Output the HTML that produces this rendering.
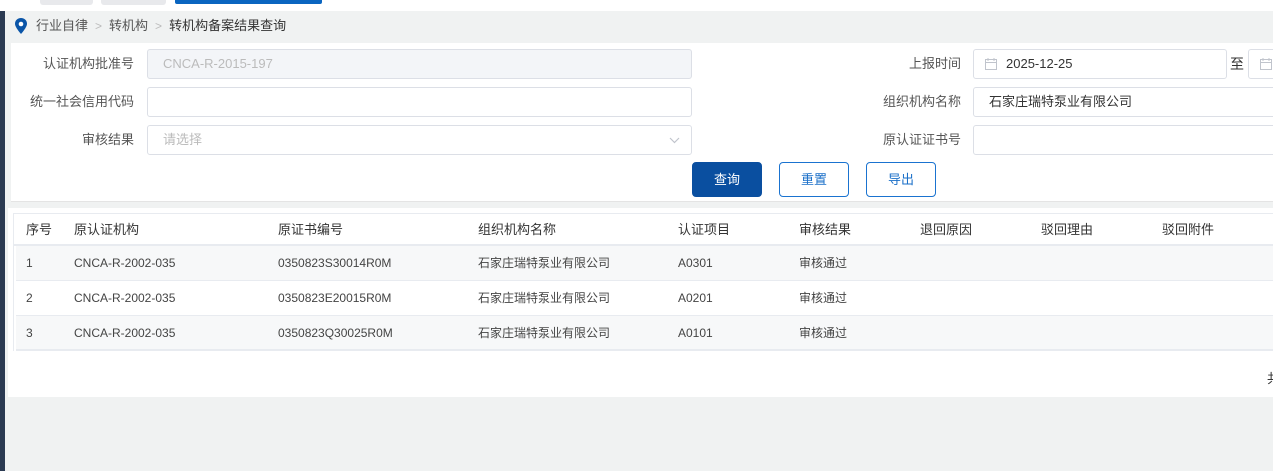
<!DOCTYPE html><html><head><meta charset="utf-8"><style>
*{box-sizing:border-box;margin:0;padding:0}
body{width:1273px;height:471px;overflow:hidden;background:#f0f2f2;font-family:"Liberation Sans","Noto Sans CJK SC",sans-serif;position:relative;color:#333}
.a{position:absolute}
.lbl{position:absolute;font-size:13px;color:#555;text-align:right;width:134px;line-height:30px}
.inp{position:absolute;height:30px;border:1px solid #dcdfe6;border-radius:3px;background:#fff;font-size:13px;line-height:28px;padding-left:15px;color:#333}
.btn{position:absolute;top:162px;width:70px;height:35px;border:1px solid #1a73d0;border-radius:4px;color:#1a6fc8;font-size:13px;text-align:center;line-height:33px;background:#fff}
.th{position:absolute;top:214px;font-size:13px;line-height:31px;color:#333}
.row{position:absolute;left:16px;width:1257px;height:35px;border-bottom:1px solid #e8ebf0}
.c{position:absolute;font-size:12px;line-height:35px;color:#444}
.sep{color:#bbb;margin:0 7px;font-size:12px}
</style></head><body>
<div class="a" style="left:0;top:0;width:1273px;height:11px;background:#fff"></div>
<div class="a" style="left:40px;top:0;width:53px;height:5px;background:#e8e9ec;border-radius:0 0 3px 3px"></div>
<div class="a" style="left:101px;top:0;width:65px;height:5px;background:#e8e9ec;border-radius:0 0 3px 3px"></div>
<div class="a" style="left:175px;top:0;width:147px;height:4px;background:#0a65c0;border-radius:0 0 2px 2px"></div>
<div class="a" style="left:0;top:11px;width:5px;height:460px;background:#2b3a52"></div>
<svg class="a" style="left:14px;top:18px" width="14" height="16" viewBox="0 0 14 16"><path d="M7 0C3.4 0 1 2.6 1 5.8 1 9.5 7 16 7 16s6-6.5 6-10.2C13 2.6 10.6 0 7 0z" fill="#0a55a8"/><circle cx="7" cy="6" r="2.3" fill="#fff"/></svg>
<div class="a" style="left:36px;top:17px;font-size:13px;line-height:18px;color:#555">行业自律<span class="sep">&gt;</span>转机构<span class="sep">&gt;</span><span style="color:#333">转机构备案结果查询</span></div>
<div class="a" style="left:11px;top:43px;width:1262px;height:159px;background:#fff;border-bottom:1px solid #e4e4e4"></div>
<div class="lbl" style="left:0;top:49px">认证机构批准号</div>
<div class="inp" style="left:147px;top:49px;width:545px;background:#f3f5f8;color:#bbb">CNCA-R-2015-197</div>
<div class="lbl" style="left:0;top:87px">统一社会信用代码</div>
<div class="inp" style="left:147px;top:87px;width:545px"></div>
<div class="lbl" style="left:0;top:125px">审核结果</div>
<div class="inp" style="left:147px;top:125px;width:545px;color:#bbb">请选择<svg style="position:absolute;right:11px;top:11px" width="11" height="7"><path d="M1 1l4.5 4.5L10 1" fill="none" stroke="#c0c4cc" stroke-width="1.2"/></svg></div>
<div class="lbl" style="left:827px;top:49px">上报时间</div>
<div class="inp" style="left:973px;top:49px;width:254px;padding-left:32px">2025-12-25<svg style="position:absolute;left:11px;top:8px" width="12" height="12"><rect x="0.5" y="1.5" width="11" height="10" fill="none" stroke="#c0c4cc"/><path d="M0 4.5h12M3 0v3M9 0v3" stroke="#c0c4cc"/></svg></div>
<div class="a" style="left:1230px;top:49px;font-size:14px;line-height:30px">至</div>
<div class="inp" style="left:1248px;top:49px;width:40px"><svg style="position:absolute;left:11px;top:8px" width="12" height="12"><rect x="0.5" y="1.5" width="11" height="10" fill="none" stroke="#c0c4cc"/><path d="M0 4.5h12M3 0v3M9 0v3" stroke="#c0c4cc"/></svg></div>
<div class="lbl" style="left:827px;top:87px">组织机构名称</div>
<div class="inp" style="left:973px;top:87px;width:310px">石家庄瑞特泵业有限公司</div>
<div class="lbl" style="left:827px;top:125px">原认证证书号</div>
<div class="inp" style="left:973px;top:125px;width:310px"></div>
<div class="btn" style="left:692px;background:#0a4fa0;border-color:#0a4fa0;color:#fff">查询</div>
<div class="btn" style="left:779px">重置</div>
<div class="btn" style="left:866px">导出</div>
<div class="a" style="left:8px;top:208px;width:1265px;height:189px;background:#fff"></div>
<div class="a" style="left:13px;top:213px;width:1260px;height:138px;border-left:1px solid #e8ebf0;border-top:1px solid #e8ebf0"></div>
<div class="a" style="left:13px;top:244px;width:1260px;height:2px;background:#e8ebf0"></div>
<div class="th" style="left:26px">序号</div><div class="th" style="left:74px">原认证机构</div><div class="th" style="left:278px">原证书编号</div><div class="th" style="left:478px">组织机构名称</div><div class="th" style="left:678px">认证项目</div><div class="th" style="left:799px">审核结果</div><div class="th" style="left:920px">退回原因</div><div class="th" style="left:1041px">驳回理由</div><div class="th" style="left:1162px">驳回附件</div>
<div class="row" style="top:246px;background:#f7f8f9"></div>
<div class="row" style="top:281px;background:#fff"></div>
<div class="row" style="top:316px;background:#f7f8f9;border-bottom:2px solid #e8ebf0"></div>
<div class="c" style="left:26px;top:246px">1</div><div class="c" style="left:74px;top:246px">CNCA-R-2002-035</div><div class="c" style="left:278px;top:246px">0350823S30014R0M</div><div class="c" style="left:478px;top:246px">石家庄瑞特泵业有限公司</div><div class="c" style="left:678px;top:246px">A0301</div><div class="c" style="left:799px;top:246px">审核通过</div>
<div class="c" style="left:26px;top:281px">2</div><div class="c" style="left:74px;top:281px">CNCA-R-2002-035</div><div class="c" style="left:278px;top:281px">0350823E20015R0M</div><div class="c" style="left:478px;top:281px">石家庄瑞特泵业有限公司</div><div class="c" style="left:678px;top:281px">A0201</div><div class="c" style="left:799px;top:281px">审核通过</div>
<div class="c" style="left:26px;top:316px">3</div><div class="c" style="left:74px;top:316px">CNCA-R-2002-035</div><div class="c" style="left:278px;top:316px">0350823Q30025R0M</div><div class="c" style="left:478px;top:316px">石家庄瑞特泵业有限公司</div><div class="c" style="left:678px;top:316px">A0101</div><div class="c" style="left:799px;top:316px">审核通过</div>
<div class="a" style="left:1267px;top:368px;font-size:13px">共</div>
</body></html>
